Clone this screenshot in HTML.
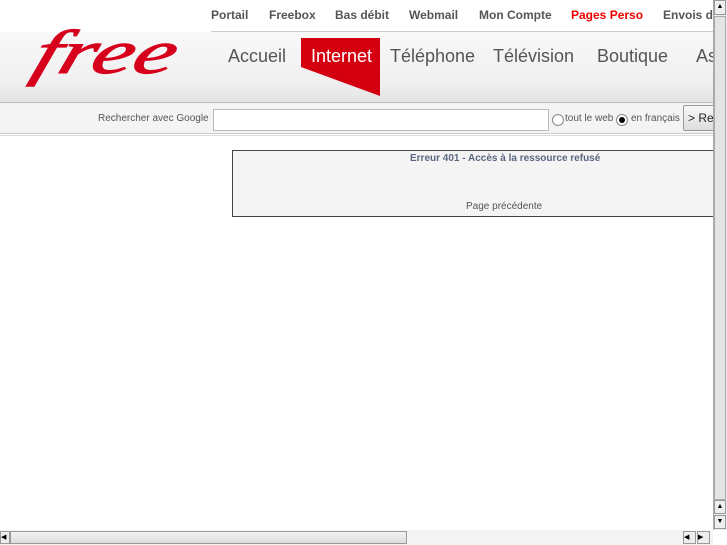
<!DOCTYPE html><html><head><meta charset="utf-8"><style>
body{margin:0;width:727px;height:545px;overflow:hidden;background:#fff;font-family:"Liberation Sans",sans-serif;position:relative}
.a{position:absolute;white-space:nowrap}
.top{top:8px;font-size:12px;font-weight:bold;color:#555}
.nav{top:46px;font-size:18px;color:#555}
</style></head><body>
<div class="a" style="left:211px;top:31px;width:502px;height:1px;background:#ccc"></div>
<div class="a" style="left:0;top:32px;width:713px;height:70px;background:linear-gradient(#f8f8f8,#f0f0f0 70%,#e4e4e4)"></div>
<div class="a" style="left:0;top:102px;width:713px;height:1px;background:#bbb"></div>
<div class="a" style="left:0;top:103px;width:713px;height:30px;background:#f4f4f4;border-bottom:1px solid #ccc"></div>
<div class="a" style="left:0;top:135px;width:713px;height:1px;background:#ddd"></div>
<span class="a top" style="left:211px">Portail</span>
<span class="a top" style="left:269px">Freebox</span>
<span class="a top" style="left:335px">Bas débit</span>
<span class="a top" style="left:409px">Webmail</span>
<span class="a top" style="left:479px">Mon Compte</span>
<span class="a top" style="left:571px;color:#e00">Pages Perso</span>
<span class="a top" style="left:663px">Envois d</span>
<span class="a" style="left:47px;top:18px;font-family:'Liberation Serif',serif;font-style:italic;font-size:62px;color:#d6001c;transform:scaleX(1.5) skewX(-12deg);transform-origin:left top;-webkit-text-stroke:1px #d6001c">free</span>
<svg class="a" style="left:301px;top:38px" width="80" height="60"><polygon points="0,0 79,0 79,58 0,29" fill="#d40010"/></svg>
<span class="a nav" style="left:228px">Accueil</span>
<span class="a nav" style="left:311px;color:#fff">Internet</span>
<span class="a nav" style="left:390px">Téléphone</span>
<span class="a nav" style="left:493px">Télévision</span>
<span class="a nav" style="left:597px">Boutique</span>
<span class="a nav" style="left:696px">As</span>
<span class="a" style="left:98px;top:113px;font-size:10px;color:#555">Rechercher avec Google</span>
<div class="a" style="left:213px;top:109px;width:334px;height:20px;background:#fff;border:1px solid #bbb"></div>
<div class="a" style="left:552px;top:114px;width:10px;height:10px;border:1px solid #888;border-radius:50%;background:#fff"></div>
<span class="a" style="left:565px;top:113px;font-size:10px;color:#555">tout le web</span>
<div class="a" style="left:616px;top:114px;width:10px;height:10px;border:1px solid #888;border-radius:50%;background:#fff"></div>
<div class="a" style="left:619px;top:117px;width:6px;height:6px;border-radius:50%;background:#000"></div>
<span class="a" style="left:631px;top:113px;font-size:10px;color:#555">en français</span>
<div class="a" style="left:683px;top:105px;width:40px;height:24px;background:linear-gradient(#f8f8f8,#ddd);border:1px solid #999;border-radius:2px"></div>
<span class="a" style="left:688px;top:111px;font-size:12px;color:#222">&gt; Re</span>
<div class="a" style="left:232px;top:150px;width:490px;height:65px;background:#f4f4f4;border:1px solid #444"></div>
<span class="a" style="left:410px;top:153px;font-size:10px;font-weight:bold;color:#5a6680">Erreur 401 - Accès à la ressource refusé</span>
<span class="a" style="left:466px;top:201px;font-size:10px;color:#555">Page précédente</span>
<div class="a" style="left:713px;top:0;width:14px;height:530px;background:#ececec;border-left:1px solid #aaa"></div>
<div class="a" style="left:714px;top:16px;width:12px;height:484px;background:#e4e4e4;border:1px solid #aaa;box-sizing:border-box"></div>
<div class="a" style="left:714px;top:0;width:12px;height:15px;background:#eee;border:1px solid #999;box-sizing:border-box;font-size:7px;text-align:center;line-height:12px">▲</div>
<div class="a" style="left:714px;top:500px;width:12px;height:14px;background:#eee;border:1px solid #999;box-sizing:border-box;font-size:7px;text-align:center;line-height:12px">▲</div>
<div class="a" style="left:714px;top:515px;width:12px;height:14px;background:#eee;border:1px solid #999;box-sizing:border-box;font-size:7px;text-align:center;line-height:12px">▼</div>
<div class="a" style="left:0;top:530px;width:713px;height:15px;background:#f4f4f4"></div>
<div class="a" style="left:0;top:531px;width:10px;height:13px;background:#eee;border:1px solid #999;box-sizing:border-box;font-size:7px;line-height:11px">◀</div>
<div class="a" style="left:10px;top:531px;width:397px;height:13px;background:linear-gradient(#f2f2f2,#ddd);border:1px solid #999;box-sizing:border-box"></div>
<div class="a" style="left:683px;top:531px;width:13px;height:13px;background:#eee;border:1px solid #999;box-sizing:border-box;font-size:7px;line-height:11px">◀</div>
<div class="a" style="left:697px;top:531px;width:13px;height:13px;background:#eee;border:1px solid #999;box-sizing:border-box;font-size:7px;line-height:11px">▶</div>
</body></html>
